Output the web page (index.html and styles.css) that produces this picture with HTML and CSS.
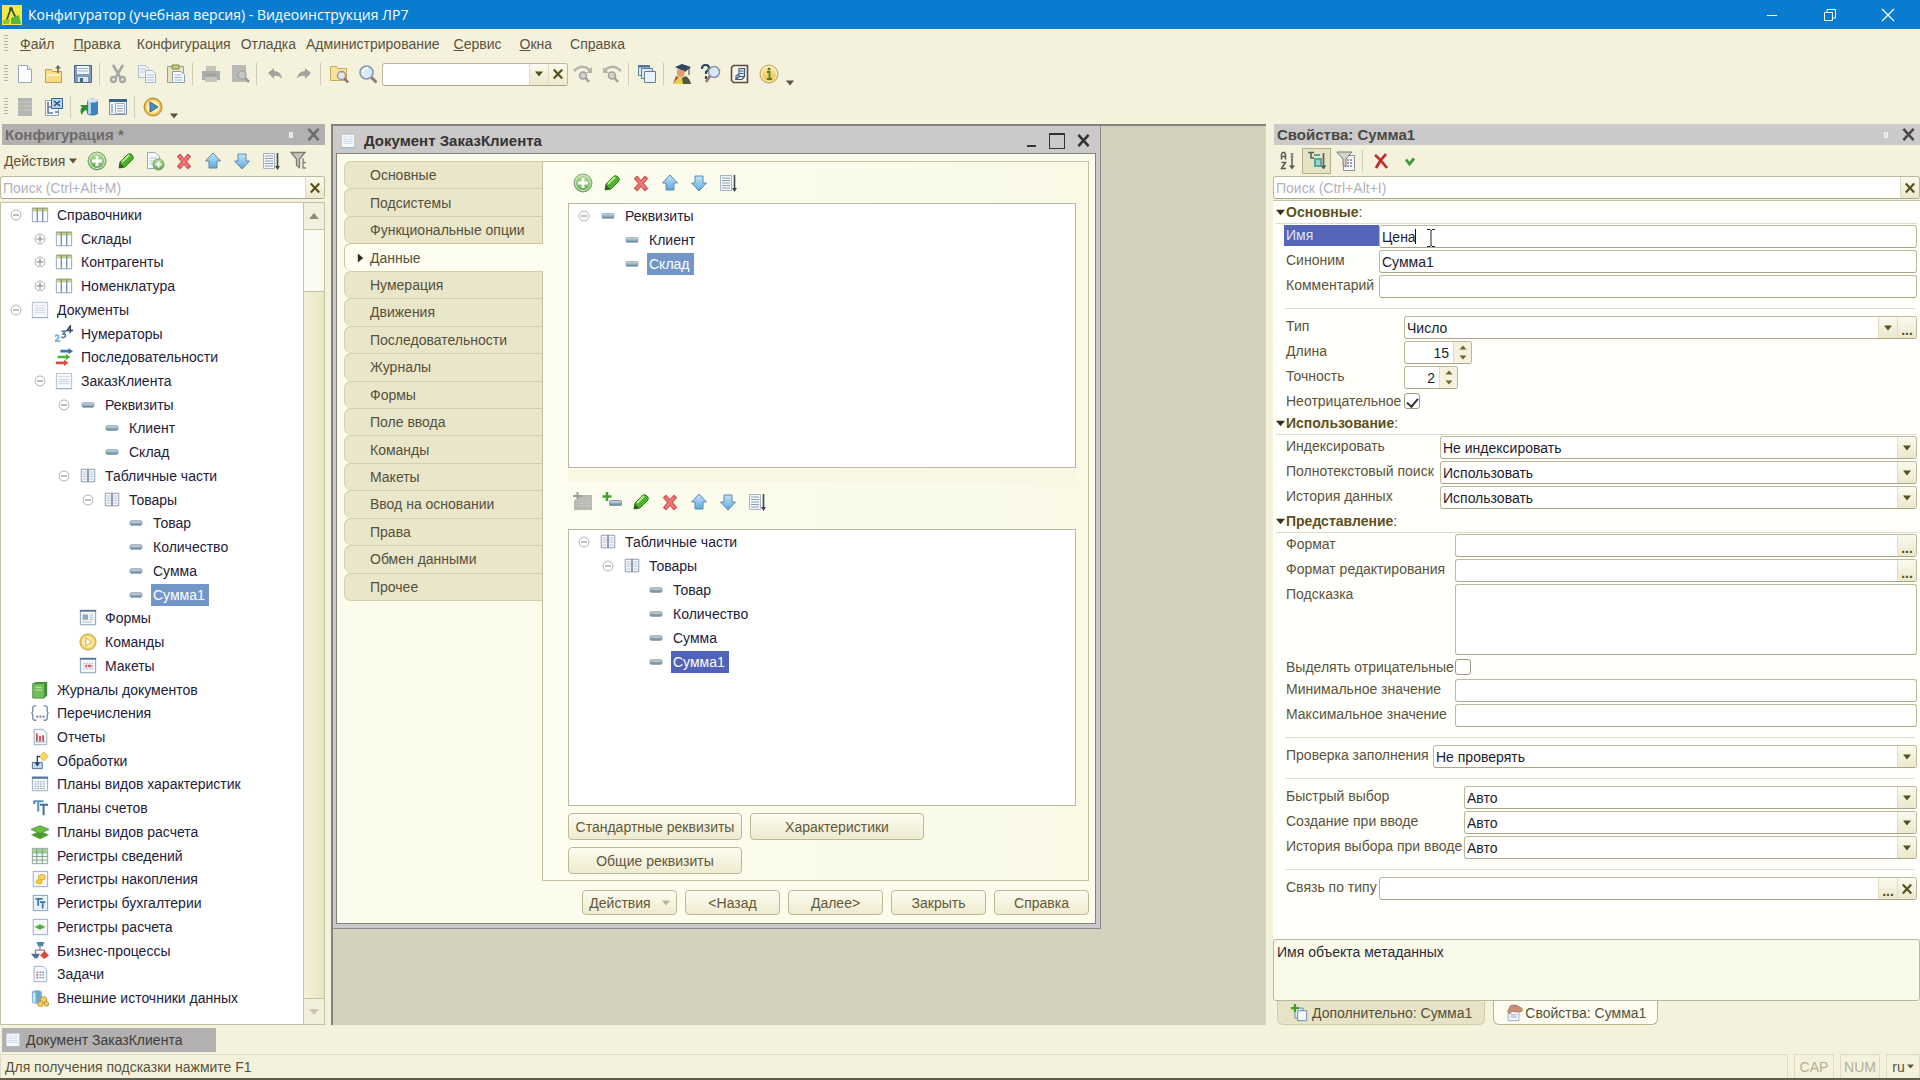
FILE: index.html
```html
<!DOCTYPE html>
<html lang="ru">
<head>
<meta charset="utf-8">
<title>Конфигуратор (учебная версия) - Видеоинструкция ЛР7</title>
<link rel="stylesheet" href="styles.css">
</head>
<body>
<svg class="sprite" aria-hidden="true">
  <defs>
    <linearGradient id="gGreen" x1="0" y1="0" x2="0" y2="1"><stop offset="0" stop-color="#b9e0a0"/><stop offset="1" stop-color="#5fa653"/></linearGradient>
    <linearGradient id="gBlue" x1="0" y1="0" x2="0" y2="1"><stop offset="0" stop-color="#c4e6fa"/><stop offset="1" stop-color="#5fa8dc"/></linearGradient>
    <linearGradient id="gGold" x1="0" y1="0" x2="0" y2="1"><stop offset="0" stop-color="#fdf0b4"/><stop offset="1" stop-color="#e9b93f"/></linearGradient>
    <linearGradient id="gBar" x1="0" y1="0" x2="0" y2="1"><stop offset="0" stop-color="#dbe8ee"/><stop offset="1" stop-color="#5c7f95"/></linearGradient>
  </defs>
  <symbol id="plus-circle" viewBox="0 0 20 20"><circle cx="10" cy="10" r="9" fill="url(#gGreen)" stroke="#7fa278"/><circle cx="10" cy="10" r="7.500" fill="none" stroke="#d3ecc6"/><path d="M10 5v10M5 10h10" stroke="#fff" stroke-width="2.800"/></symbol>
  <symbol id="pencil" viewBox="0 0 20 20"><path d="M3 17l1-6L12 3q2-1 4 1t1 4L9 16z" fill="#4db32e" stroke="#2d7d1c"/><path d="M6 11l7-7" stroke="#b8ee90" stroke-width="2"/><path d="M3 17l1-5 4 4z" fill="#35591f"/></symbol>
  <symbol id="cross-red" viewBox="0 0 20 20"><path d="M4.500 4l11 13M15.500 4l-11 13" stroke="#cf5050" stroke-width="4.500"/><path d="M5.500 5l9 11M14.500 5l-9 11" stroke="#ee7878" stroke-width="2.400"/></symbol>
  <symbol id="arrow-up" viewBox="0 0 20 20"><path d="M10 2l7.500 8H14v7H6v-7H2.500z" fill="url(#gBlue)" stroke="#5f8aab"/></symbol>
  <symbol id="arrow-down" viewBox="0 0 20 20"><path d="M10 18l7.500-8H14V3H6v7H2.500z" fill="url(#gBlue)" stroke="#5f8aab"/></symbol>
  <symbol id="sort-list" viewBox="0 0 20 20"><path d="M2.500 2.500h11v15h-11z" fill="#f6f9fc" stroke="#a7b4c4"/><path d="M4 5h8M4 7.500h8M4 10h8M4 12.500h8M4 15h8" stroke="#8a9cb4"/><path d="M16.500 2v14" stroke="#3c4654" stroke-width="1.600"/><path d="M14 15h5l-2.500 4z" fill="#3c4654"/></symbol>
  <symbol id="doc-plus" viewBox="0 0 20 20"><path d="M2.500 1.500h8l4 4v12h-12z" fill="#f5f8fb" stroke="#9aaabc"/><path d="M5 7h7M5 10h7M5 13h5" stroke="#b3c0d0"/><circle cx="13.500" cy="13.500" r="5.500" fill="url(#gGreen)" stroke="#6f9a68"/><path d="M13.500 10.500v6M10.500 13.500h6" stroke="#fff" stroke-width="2"/></symbol>
  <symbol id="funnel-tree" viewBox="0 0 20 20"><path d="M1 1.500h14L9.500 8v8.500l-3-2V8z" fill="#c7c7be" stroke="#7b7b74" stroke-width="1.300"/><path d="M13 7v10h3M13 11.500h3" stroke="#8b8b84" fill="none" stroke-width="1.500"/></symbol>
  <symbol id="page" viewBox="0 0 20 20"><path d="M3.500 1.500h9l4 4v13h-13z" fill="#fcfdff" stroke="#98a8ba"/><path d="M12.500 1.500v4h4" fill="#dfe8f1" stroke="#98a8ba"/></symbol>
  <symbol id="folder-open" viewBox="0 0 20 20"><path d="M1.500 5.500h6l1 2h9v11h-16z" fill="#f7dc85" stroke="#c2a052"/><path d="M14 9V4" stroke="#6d6647" stroke-width="1.600"/><path d="M11 4.500h6L14 1z" fill="#6d6647"/><path d="M3 11h13" stroke="#fdf2be" stroke-width="2"/></symbol>
  <symbol id="floppy" viewBox="0 0 20 20"><path d="M1.500 1.500h17v17h-17z" fill="#7f9cbd" stroke="#4d6584"/><path d="M4 2h12v8H4z" fill="#f3f7fa"/><path d="M5 4.500h10M5 7h10" stroke="#9db0c4"/><path d="M5 13h10v5H5z" fill="#dde6ee"/><path d="M7 14h3v4H7z" fill="#4d6584"/></symbol>
  <symbol id="scissors" viewBox="0 0 20 20"><path d="M5 1l7 12M15 1L8 13" stroke="#a5a8a6" stroke-width="2.600"/><circle cx="5.500" cy="15.500" r="2.500" fill="none" stroke="#a5a8a6" stroke-width="2.400"/><circle cx="14.500" cy="15.500" r="2.500" fill="none" stroke="#a5a8a6" stroke-width="2.400"/></symbol>
  <symbol id="copy" viewBox="0 0 20 20"><path d="M1.500 1.500h7l3 3v9h-10z" fill="#eef3f6" stroke="#b2c0cc"/><path d="M3 5h6M3 8h6" stroke="#c0ccd6"/><path d="M8.500 6.500h7l3 3v9h-10z" fill="#f3f7fa" stroke="#a5b6c6"/><path d="M10 11h7M10 13.500h7M10 16h7" stroke="#b4c4d4"/></symbol>
  <symbol id="clipboard" viewBox="0 0 20 20"><path d="M1.500 2.500h16v16h-16z" fill="#ece5bc" stroke="#96a08e"/><path d="M6 1h7v4H6z" fill="#c5d070" stroke="#7c8850"/><path d="M6.500 7.500h8l4 3v8h-12z" fill="#fafcff" stroke="#8ba0b6"/><path d="M8.500 11h7M8.500 13.500h8M8.500 16h8" stroke="#9db2c8"/></symbol>
  <symbol id="printer" viewBox="0 0 20 20"><path d="M5 2h10v6H5z" fill="#c4c4be"/><path d="M1 8q0-1 1-1h16q1 0 1 1v8H1z" fill="#aeaea8"/><path d="M4 13h12v5H4z" fill="#c6c6bf"/><path d="M4 11h12" stroke="#94948e"/></symbol>
  <symbol id="preview" viewBox="0 0 20 20"><path d="M2 1h14v17H2z" fill="#b9b9b6"/><circle cx="12" cy="11" r="4" fill="#c6c6c2" stroke="#a5a5a1" stroke-width="1.500"/><path d="M15 14l4 4" stroke="#999994" stroke-width="2.500"/></symbol>
  <symbol id="undo" viewBox="0 0 20 20"><path d="M3 9l6-5v3q7 0 8 8-3-4-8-3v3z" fill="#a3a39d"/></symbol>
  <symbol id="redo" viewBox="0 0 20 20"><path d="M17 9l-6-5v3q-7 0-8 8 3-4 8-3v3z" fill="#a3a39d"/></symbol>
  <symbol id="folder-find" viewBox="0 0 20 20"><path d="M1.500 2.500h6l1 2h9v12h-16z" fill="#f6e39c" stroke="#c9ac5e"/><circle cx="12.500" cy="11.500" r="4" fill="#dfe7f3" stroke="#a38d90" stroke-width="1.300"/><path d="M15.500 14.500l3.500 4" stroke="#8f6b62" stroke-width="2.400"/></symbol>
  <symbol id="magnifier" viewBox="0 0 20 20"><circle cx="8.500" cy="8.500" r="6.500" fill="#d8e8fa" stroke="#8596ae" stroke-width="1.600"/><path d="M5 8q1-4 5-4" stroke="#fff" stroke-width="1.500" fill="none"/><path d="M13.500 13.500l5 5" stroke="#8f7a70" stroke-width="3"/></symbol>
  <symbol id="find-next" viewBox="0 0 20 20"><path d="M1 7q8-8 16-1" fill="none" stroke="#b4b4ad" stroke-width="2.500"/><path d="M19 3v6h-6z" fill="#b4b4ad"/><circle cx="10" cy="11.500" r="3.500" fill="#d3d3cc" stroke="#9f9f99" stroke-width="1.500"/><path d="M12.500 14l3.500 4" stroke="#9f9f99" stroke-width="2.400"/></symbol>
  <symbol id="find-prev" viewBox="0 0 20 20"><path d="M3 6q8-7 16 1" fill="none" stroke="#b4b4ad" stroke-width="2.500"/><path d="M1 3v6h6z" fill="#b4b4ad"/><circle cx="10" cy="11.500" r="3.500" fill="#d3d3cc" stroke="#9f9f99" stroke-width="1.500"/><path d="M12.500 14l3.500 4" stroke="#9f9f99" stroke-width="2.400"/></symbol>
  <symbol id="windows" viewBox="0 0 20 20"><path d="M1.500 1.500h11v10h-11z" fill="#dce9f4" stroke="#5e7f9e"/><path d="M1.500 2.500h11" stroke="#4a708f" stroke-width="2"/><path d="M4.500 4.500h11v10h-11z" fill="#dce9f4" stroke="#5e7f9e"/><path d="M7.500 7.500h11v11h-11z" fill="#eaf3fb" stroke="#5e7f9e"/></symbol>
  <symbol id="graduate" viewBox="0 0 20 20"><path d="M3 3l7-3 9 3-6 5z" fill="#31455c"/><path d="M5 5l8 2-1 5-3 2-4-3z" fill="#dea06c"/><path d="M17 4v7" stroke="#31455c"/><path d="M1 20l8-8 3 8z" fill="#e6cf42"/><path d="M10 14l4-2q4 3 5 8h-8z" fill="#4a5a3a"/><path d="M1 20l3-8 3 1z" fill="#b0562e"/></symbol>
  <symbol id="help-find" viewBox="0 0 20 20"><path d="M1 5q0-4 3.500-4T8 4q0 2-3 4v2M5 12v3" fill="none" stroke="#35475c" stroke-width="2.200"/><circle cx="13" cy="8" r="5.500" fill="#d8e8f8" stroke="#8294ae" stroke-width="1.500"/><path d="M9 12l-4 6" stroke="#98786c" stroke-width="2.600"/></symbol>
  <symbol id="book" viewBox="0 0 20 20"><path d="M3.500 1.500h14v17h-14l-2-2v-13z" fill="#f8f3e8" stroke="#5c4a42" stroke-width="1.600"/><path d="M9 4.500h5.500v8H9zM9 12.500l-3 3h6l2.500-3M6 15.500V12l3-2" fill="#e1eaf5" stroke="#3e5878" stroke-width="1.200"/><path d="M10 7h3.500M10 9.500h3.500" stroke="#3e5878"/></symbol>
  <symbol id="info" viewBox="0 0 20 20"><circle cx="10" cy="10" r="9" fill="url(#gGold)" stroke="#bfa267"/><circle cx="10" cy="10" r="7.500" fill="none" stroke="#fff6d2"/><path d="M8 8h2.500v7M8 15h5" stroke="#54802c" stroke-width="1.800" fill="none"/><circle cx="10" cy="5" r="1.500" fill="#54802c"/></symbol>
  <symbol id="gray-list" viewBox="0 0 20 20"><path d="M3 1h14v18H3z" fill="#b5b5b1"/><path d="M3 5h14M3 9h14M3 13h14" stroke="#c6c6c1"/></symbol>
  <symbol id="tree-close" viewBox="0 0 20 20"><path d="M1.500 3.500h13v15h-13z" fill="#f5f9fd" stroke="#8aa6c4"/><path d="M4 5v11h5M4 10h5M11 10h3M11 15h3" stroke="#60799c" fill="none" stroke-width="1.600"/><path d="M7.500 1.500h11v10h-11z" fill="#b7d4ef" stroke="#34659a"/><path d="M10 4l6 5M16 4l-6 5" stroke="#27527f" stroke-width="1.600"/></symbol>
  <symbol id="db-update" viewBox="0 0 20 20"><path d="M8 3q5-3 11 0v14q-6 3-11 0z" fill="#3e83b8"/><path d="M9 4h3v13H9z" fill="#a9d3ee"/><ellipse cx="13.500" cy="3.500" rx="5.500" ry="2" fill="#cfe5f4"/><path d="M1 8h8v8l-2-3q-3 1-4 5-3-4 0-8z" fill="#2e8d3a"/></symbol>
  <symbol id="form-win" viewBox="0 0 20 20"><path d="M1.500 2.500h17v15h-17z" fill="#eef4fa" stroke="#7a93b0"/><path d="M1 3.500h18" stroke="#3e6284" stroke-width="3"/><path d="M4 7v9" stroke="#a8bacd" stroke-width="2"/><path d="M7.500 6.500h9v10h-9z" fill="#fff" stroke="#a8a9bd"/><path d="M9 9h6M9 11.500h6M9 14h6" stroke="#8495ae"/></symbol>
  <symbol id="play" viewBox="0 0 20 20"><circle cx="10" cy="10" r="9" fill="#e9b93f" stroke="#b58a2f"/><circle cx="10" cy="10" r="6.800" fill="#fdeeb0"/><path d="M7 5l8 5-8 5z" fill="#4b8cbe" stroke="#2e638c"/></symbol>
  <symbol id="play-gold" viewBox="0 0 20 20"><circle cx="10" cy="10" r="9" fill="#f0cc62" stroke="#c6a047"/><circle cx="10" cy="10" r="6.800" fill="#fbeaa6"/><path d="M7.500 5.500l7 4.500-7 4.500z" fill="#fffbe8" stroke="#d2a63d"/></symbol>
  <symbol id="expand-minus" viewBox="0 0 16 16"><circle cx="8" cy="8" r="5" fill="#fff" stroke="#b3b3b3"/><path d="M5 8h6" stroke="#7f7f7f"/></symbol>
  <symbol id="expand-plus" viewBox="0 0 16 16"><circle cx="8" cy="8" r="5" fill="#fff" stroke="#b3b3b3"/><path d="M4.500 8h7M8 4.500v7" stroke="#7f7f7f"/></symbol>
  <symbol id="catalog" viewBox="0 0 20 20"><path d="M1.500 2.500h17v15h-17z" fill="#fafcff" stroke="#8a9cb8"/><path d="M2 2h16v4H2z" fill="#c9cf7e"/><path d="M7 2v15.500M13 2v15.500" stroke="#7c8eae" stroke-width="1.500"/><path d="M1.500 2.500h17" stroke="#97a06a"/></symbol>
  <symbol id="document" viewBox="0 0 20 20"><path d="M1.500 1.500h17v17h-17z" fill="#f6f8fb" stroke="#a9b6c8"/><path d="M4 5h5M11 5h5M4 8h12M4 10.500h12M4 13h12" stroke="#c9d2df"/><path d="M1 18.500h18" stroke="#8fb0c8"/></symbol>
  <symbol id="numbers" viewBox="0 0 20 20"><path d="M0 13q2-3 4-1 1 2-4 6h6" fill="none" stroke="#7fb2d6" stroke-width="2"/><path d="M7 7h4.500L9 10q4 0 2 3-2 2-4 0" fill="none" stroke="#4878a4" stroke-width="1.800"/><path d="M17 9V1l-3.500 5H20" fill="none" stroke="#2d4560" stroke-width="1.700"/></symbol>
  <symbol id="sequence" viewBox="0 0 20 20"><path d="M6 2h9V0l5 3.500L15 7V5H6z" fill="#3f74aa"/><path d="M3 8.500h9v-2l5 3.500-5 3.500v-2H3z" fill="#4cb238"/><path d="M1 15h9v-2l5 3.500-5 3.500v-2H1z" fill="#dd4a3c"/></symbol>
  <symbol id="attribute" viewBox="0 0 20 20"><rect x="3.500" y="7.500" width="13" height="5" rx="1" fill="url(#gBar)" stroke="#7d97a8"/></symbol>
  <symbol id="table-part" viewBox="0 0 20 20"><path d="M2.500 2.500h15v14h-15z" fill="#f6f8fc" stroke="#8792aa"/><path d="M10 2.500v14" stroke="#66718c" stroke-width="1.500"/><path d="M4 5.500h4.500M11.500 5.500H16M4 8h4.500M11.500 8H16M4 10.500h4.500M11.500 10.500H16M4 13.500h4.500M11.500 13.500H16" stroke="#b4bed0"/></symbol>
  <symbol id="form" viewBox="0 0 20 20"><path d="M1.500 1.500h17v16h-17z" fill="#f3f7fb" stroke="#7f94ac"/><path d="M1 2h18" stroke="#55789a" stroke-width="2"/><path d="M4 6h6v6H4z" fill="#8ea8c2"/><path d="M12 6.500h4M12 9h4M12 11.500h4M4 14.500h10" stroke="#a8b8ca"/></symbol>
  <symbol id="template" viewBox="0 0 20 20"><path d="M1.500 1.500h17v16h-17z" fill="#f3f7fb" stroke="#7f94ac"/><path d="M1 2h18" stroke="#55789a" stroke-width="2"/><path d="M5 7h11M5 10h11M5 13h11" stroke="#a9b6c8" stroke-dasharray="2 1"/><path d="M7 8.500h2v3H7zM10 8.500h4v3h-4z" fill="#e0566b"/></symbol>
  <symbol id="journal" viewBox="0 0 20 20"><path d="M2 3l3-2h13v15l-3 3H2z" fill="#3f8f35"/><path d="M2 3h13v16H2z" fill="#74bd5c" stroke="#4c9340"/><path d="M5 7h7M5 10h7" stroke="#c9edb8"/></symbol>
  <symbol id="enum" viewBox="0 0 20 20"><path d="M6 2H4q-2 0-2 2v4l-1 2 1 2v4q0 2 2 2h2M14 2h2q2 0 2 2v4l1 2-1 2v4q0 2-2 2h-2" fill="none" stroke="#7688a0" stroke-width="1.500"/><path d="M6 14h2M9.500 14h2M13 14h2" stroke="#5b6c86" stroke-width="2"/></symbol>
  <symbol id="report" viewBox="0 0 20 20"><path d="M3.500 1.500h10l4 4v13h-14z" fill="#f4f8fb" stroke="#94a6ba"/><path d="M6.500 6v9M10 9v6M13.500 8v7" stroke="#c94b55" stroke-width="2"/><path d="M5 15.500h11" stroke="#8ea2b8"/></symbol>
  <symbol id="processing" viewBox="0 0 20 20"><path d="M14 0l5 5-5 5-4-5z" fill="#f7dc5c" stroke="#d4b03a"/><path d="M1.500 11.500h11v7h-11z" fill="#c6d9ea" stroke="#3f678c"/><path d="M10 5H7v8" fill="none" stroke="#2c4258" stroke-width="1.500"/><path d="M4 12h6l-3 4z" fill="#2c4258"/></symbol>
  <symbol id="char-plan" viewBox="0 0 20 20"><path d="M1.500 2.500h17v15h-17z" fill="#f3f8fc" stroke="#8ea4ba"/><path d="M1 3h18" stroke="#557a9c" stroke-width="2.500"/><path d="M4 7.500h12M4 10h12M4 12.500h12M4 15h12" stroke="#8aa4be" stroke-dasharray="2 1"/></symbol>
  <symbol id="accounts" viewBox="0 0 20 20"><path d="M3 2.500h11M8 3v11M3.500 2v3.500" stroke="#5f95be" stroke-width="2.400" fill="none"/><path d="M10 6.500h9M14 6v12" stroke="#3f6f9c" stroke-width="2.200" fill="none"/></symbol>
  <symbol id="calc-plan" viewBox="0 0 20 20"><path d="M0 13l10-4 10 4-10 5z" fill="#4f9c33"/><path d="M0 7l10-4 10 4-10 5z" fill="#6dba45" stroke="#418a2a" stroke-width=".8"/></symbol>
  <symbol id="info-reg" viewBox="0 0 20 20"><path d="M1.500 1.500h17v17h-17z" fill="#f1f8f1" stroke="#7fa088"/><path d="M2 2h16v4H2z" fill="#a5d098"/><path d="M6.500 2v16M12.500 2v16M2 6.500h16M2 10.500h16M2 14.500h16" stroke="#74997f"/></symbol>
  <symbol id="accum-reg" viewBox="0 0 20 20"><path d="M2.500 1.500h16v17h-16z" fill="#f4f8fc" stroke="#8ea4ba"/><ellipse cx="9" cy="13" rx="4" ry="3" fill="#efc33a"/><ellipse cx="12" cy="8" rx="4" ry="3" fill="#f6d85a" stroke="#d4a42c"/></symbol>
  <symbol id="account-reg" viewBox="0 0 20 20"><path d="M2.500 1.500h16v17h-16z" fill="#e9f2fa" stroke="#6f97b8"/><path d="M5 5.500h8M8 5v8" stroke="#3f78a8" stroke-width="2"/><path d="M10 9h6M13 9v7" stroke="#3f78a8" stroke-width="2"/></symbol>
  <symbol id="calc-reg" viewBox="0 0 20 20"><path d="M2.500 1.500h16v17h-16z" fill="#f4f8fc" stroke="#8ea4ba"/><path d="M4 10l6-3 6 3-6 3z" fill="#5bab3a"/></symbol>
  <symbol id="process" viewBox="0 0 20 20"><path d="M6 0h9l-2 5H8z" fill="#4e87b4"/><path d="M10 5v4M5 13V9h10v3" stroke="#9a7f8b" fill="none" stroke-width="1.500"/><path d="M0 13h10l-3 5H4z" fill="#4a6f98"/><path d="M15 10l5 5-5 4-5-4z" fill="#d8493c"/></symbol>
  <symbol id="task" viewBox="0 0 20 20"><path d="M3.500 1.500h10l4 4v13h-14z" fill="#f6f9fc" stroke="#9aa8ba"/><path d="M6 8h2M6 11h2M6 14h2" stroke="#cf6a74" stroke-width="1.800"/><path d="M9.500 8h6M9.500 11h6M9.500 14h6" stroke="#8798ae" stroke-dasharray="2 1" stroke-width="1.500"/></symbol>
  <symbol id="ext-source" viewBox="0 0 20 20"><path d="M1 3q6-3 11 0v12q-5 3-11 0z" fill="#6fa9d2"/><path d="M2 4h3v11H2z" fill="#cfe6f5"/><circle cx="14" cy="12" r="3.500" fill="#f2cf6b" stroke="#bb8c2a"/><circle cx="10.500" cy="16.500" r="3" fill="#f2cf6b" stroke="#bb8c2a"/><circle cx="17" cy="16.500" r="2.600" fill="#f2cf6b" stroke="#bb8c2a"/></symbol>
  <symbol id="table-add-off" viewBox="0 0 20 20"><path d="M4 3h15v15H1V8h3z" fill="#b8b8b4"/><path d="M4.500 0v8M0 4h9" stroke="#9d9d98" stroke-width="2"/><path d="M2 8h17M2 11h17M2 14h17M9 5v13M14 5v13" stroke="#c4c4be"/></symbol>
  <symbol id="attr-add" viewBox="0 0 20 20"><path d="M5 0v9M.5 4.500h9" stroke="#43a02c" stroke-width="2.500"/><rect x="7.500" y="8.500" width="12" height="5" rx="1" fill="url(#gBar)" stroke="#7d97a8"/></symbol>
  <symbol id="sort-az" viewBox="0 0 20 20"><path d="M3.500 8.500v-5l1-2h2l1 2v5M3.500 5.500h4M3.500 11.500h4l-4 6h4.500" fill="none" stroke="#5a5a55" stroke-width="1.500"/><path d="M14 2v14" stroke="#5a5a55" stroke-width="1.500"/><path d="M11 14.500h6l-3 4z" fill="#5a5a55"/><path d="M12 3h4M12 6h4" stroke="#a1a19a"/></symbol>
  <symbol id="tree-sort" viewBox="0 0 20 20"><path d="M1 1.500h6M4 2v5h3" stroke="#55645c" stroke-width="1.600" fill="none"/><path d="M7 4h6M8 8h6v7H8z" stroke="#53a7a0" stroke-width="2" fill="#9fd0c8"/><path d="M16.500 2v14" stroke="#47605e" stroke-width="1.600"/><path d="M13.500 14.500h6l-3 4z" fill="#47605e"/></symbol>
  <symbol id="funnel-page" viewBox="0 0 20 20"><path d="M7.500 4.500h11v15h-11z" fill="#f4f6fa" stroke="#888f9c"/><path d="M11 9h6M11 12h6M11 15h6" stroke="#7f8898" stroke-dasharray="2 1" stroke-width="1.500"/><path d="M.8 1h15L10 8v8l-3-2V8z" fill="#d4d4cf" stroke="#7b7b74"/></symbol>
  <symbol id="cancel" viewBox="0 0 20 20"><path d="M4 4q5 4 12 13M15 3Q9 9 5 17" fill="none" stroke="#c0302b" stroke-width="2.800"/></symbol>
  <symbol id="ok" viewBox="0 0 20 20"><path d="M6 8.500l3.500 4.500L14 7.500" fill="none" stroke="#3f9b36" stroke-width="2.800"/></symbol>
  <symbol id="tab-add" viewBox="0 0 20 20"><path d="M5.500 4.500h9v11h-9z" fill="#e6eff8" stroke="#5d7ea6"/><path d="M8.500 7.500h10v11h-10z" fill="#f2f8fe" stroke="#5d7ea6"/><path d="M5.500 0v9M1 4.500h9" stroke="#3fa02c" stroke-width="2.500"/></symbol>
  <symbol id="tab-props" viewBox="0 0 20 20"><path d="M3.500 7.500h12v11h-12z" fill="#f5f8fc" stroke="#98a6b8"/><path d="M6 12h7M6 14.500h7" stroke="#8d9cb2"/><path d="M3 8l3-6q4-2 8 0l5 3v3l-6 1-5-1-3 3z" fill="#c88f76" stroke="#9b6852" stroke-width=".8"/></symbol>
  <symbol id="x" viewBox="0 0 20 20"><path d="M4 3.500l12 13M16 3.500l-12 13" stroke="currentColor" stroke-width="3"/></symbol>
  <symbol id="tri" viewBox="0 0 10 10"><path d="M0 2h10L5 8z" fill="currentColor"/></symbol>
  <symbol id="tri-up" viewBox="0 0 10 10"><path d="M0 8h10L5 2z" fill="currentColor"/></symbol>
  <symbol id="tri-right" viewBox="0 0 10 10"><path d="M2 0v10l6-5z" fill="currentColor"/></symbol>
  <symbol id="pin" viewBox="0 0 10 14"><path d="M3.500 4.500h3v5h-3z" fill="#ddd" stroke="#f4f4f4"/></symbol>
  <symbol id="min" viewBox="0 0 16 16"><path d="M3 8.500h10" stroke="currentColor"/></symbol>
  <symbol id="restore" viewBox="0 0 16 16"><path d="M2.500 5.500h8v8h-8zM5 5V2.500h8.500V11H11" fill="none" stroke="currentColor"/></symbol>
  <symbol id="close" viewBox="0 0 16 16"><path d="M2 2l12 12M14 2L2 14" stroke="currentColor" stroke-width="1.200"/></symbol>
  <symbol id="logo" viewBox="0 0 20 20"><path d="M0 0h20v20H0z" fill="#f3e94a"/><path d="M9 3L4 17M9 3l6 12" stroke="#3b5a2e" stroke-width="1.800"/><circle cx="9" cy="4" r="2" fill="#3b5a2e"/><path d="M9 13l8-3 2 9H9z" fill="#57b53a"/><path d="M1 15l7-1-1 5H1z" fill="#8fc435"/></symbol>
</svg>

<header class="titlebar">
  <svg class="logo"><use href="#logo"/></svg>
  <h1>Конфигуратор (учебная версия) - Видеоинструкция ЛР7</h1>
  <div class="sys">
    <button aria-label="Свернуть"><svg><use href="#min"/></svg></button>
    <button aria-label="Восстановить"><svg><use href="#restore"/></svg></button>
    <button aria-label="Закрыть"><svg><use href="#close"/></svg></button>
  </div>
</header>

<nav class="menu">
  <i class="grip"></i>
  <button><u>Ф</u>айл</button><button><u>П</u>равка</button><button class="tight">Конфигурация</button><button class="tight">Отладка</button><button class="tight">Администрирование</button><button><u>С</u>ервис</button><button><u>О</u>кна</button><button>Сп<u>р</u>авка</button>
</nav>

<div class="toolbar">
  <i class="grip"></i>
  <button aria-label="Новый"><svg><use href="#page"/></svg></button><button aria-label="Открыть"><svg><use href="#folder-open"/></svg></button><button aria-label="Сохранить"><svg><use href="#floppy"/></svg></button><i class="sep"></i>
  <button aria-label="Вырезать"><svg><use href="#scissors"/></svg></button><button aria-label="Копировать"><svg><use href="#copy"/></svg></button><button aria-label="Вставить"><svg><use href="#clipboard"/></svg></button><i class="sep"></i>
  <button aria-label="Печать"><svg><use href="#printer"/></svg></button><button aria-label="Просмотр"><svg><use href="#preview"/></svg></button><i class="sep"></i>
  <button aria-label="Отменить"><svg><use href="#undo"/></svg></button><button aria-label="Вернуть"><svg><use href="#redo"/></svg></button><i class="sep"></i>
  <button aria-label="Глобальный поиск"><svg><use href="#folder-find"/></svg></button><button aria-label="Найти"><svg><use href="#magnifier"/></svg></button>
  <div class="field find"><input type="text" aria-label="Текст поиска"><button aria-label="Список"><svg class="tri"><use href="#tri"/></svg></button><button aria-label="Очистить"><svg class="x"><use href="#x"/></svg></button></div>
  <button aria-label="Найти далее"><svg><use href="#find-next"/></svg></button><button aria-label="Найти ранее"><svg><use href="#find-prev"/></svg></button><i class="sep"></i>
  <button aria-label="Окна"><svg><use href="#windows"/></svg></button><i class="sep"></i>
  <button aria-label="Обучение"><svg><use href="#graduate"/></svg></button><button aria-label="Поиск в справке"><svg><use href="#help-find"/></svg></button><button aria-label="Синтакс-помощник"><svg><use href="#book"/></svg></button><button aria-label="О программе"><svg><use href="#info"/></svg></button>
  <button class="more" aria-label="Ещё"><svg class="tri"><use href="#tri"/></svg></button>
</div>

<div class="toolbar second">
  <i class="grip"></i>
  <button aria-label="Список"><svg><use href="#gray-list"/></svg></button><button aria-label="Закрыть конфигурацию"><svg><use href="#tree-close"/></svg></button><i class="sep"></i>
  <button aria-label="Обновить базу"><svg><use href="#db-update"/></svg></button><button aria-label="Окно конфигурации"><svg><use href="#form-win"/></svg></button><i class="sep"></i>
  <button aria-label="Начать отладку"><svg><use href="#play"/></svg></button>
  <button class="more" aria-label="Ещё"><svg class="tri"><use href="#tri"/></svg></button>
</div>

<main class="work">
  <aside class="config">
    <div class="panel-head dim"><h2>Конфигурация *</h2><svg class="pin"><use href="#pin"/></svg><button aria-label="Закрыть"><svg class="x"><use href="#x"/></svg></button></div>
    <div class="tools">
      <button class="actions">Действия <svg class="tri"><use href="#tri"/></svg></button>
      <button aria-label="Добавить"><svg><use href="#plus-circle"/></svg></button><button aria-label="Изменить"><svg><use href="#pencil"/></svg></button><button aria-label="Копировать"><svg><use href="#doc-plus"/></svg></button><button aria-label="Удалить"><svg><use href="#cross-red"/></svg></button><button aria-label="Вверх"><svg><use href="#arrow-up"/></svg></button><button aria-label="Вниз"><svg><use href="#arrow-down"/></svg></button><button aria-label="Сортировать"><svg><use href="#sort-list"/></svg></button><button aria-label="Отбор"><svg><use href="#funnel-tree"/></svg></button>
    </div>
    <div class="field search"><input type="text" aria-label="Поиск" placeholder="Поиск (Ctrl+Alt+M)"><button aria-label="Очистить"><svg class="x"><use href="#x"/></svg></button></div>
    <div class="tree-box">
      <ul class="tree fill">
        <li><svg class="ex"><use href="#expand-minus"/></svg><svg><use href="#catalog"/></svg><span>Справочники</span></li>
        <li class="l1"><svg class="ex"><use href="#expand-plus"/></svg><svg><use href="#catalog"/></svg><span>Склады</span></li>
        <li class="l1"><svg class="ex"><use href="#expand-plus"/></svg><svg><use href="#catalog"/></svg><span>Контрагенты</span></li>
        <li class="l1"><svg class="ex"><use href="#expand-plus"/></svg><svg><use href="#catalog"/></svg><span>Номенклатура</span></li>
        <li><svg class="ex"><use href="#expand-minus"/></svg><svg><use href="#document"/></svg><span>Документы</span></li>
        <li class="l1"><i class="ex"></i><svg><use href="#numbers"/></svg><span>Нумераторы</span></li>
        <li class="l1"><i class="ex"></i><svg><use href="#sequence"/></svg><span>Последовательности</span></li>
        <li class="l1"><svg class="ex"><use href="#expand-minus"/></svg><svg><use href="#document"/></svg><span>ЗаказКлиента</span></li>
        <li class="l2"><svg class="ex"><use href="#expand-minus"/></svg><svg><use href="#attribute"/></svg><span>Реквизиты</span></li>
        <li class="l3"><i class="ex"></i><svg><use href="#attribute"/></svg><span>Клиент</span></li>
        <li class="l3"><i class="ex"></i><svg><use href="#attribute"/></svg><span>Склад</span></li>
        <li class="l2"><svg class="ex"><use href="#expand-minus"/></svg><svg><use href="#table-part"/></svg><span>Табличные части</span></li>
        <li class="l3"><svg class="ex"><use href="#expand-minus"/></svg><svg><use href="#table-part"/></svg><span>Товары</span></li>
        <li class="l4"><i class="ex"></i><svg><use href="#attribute"/></svg><span>Товар</span></li>
        <li class="l4"><i class="ex"></i><svg><use href="#attribute"/></svg><span>Количество</span></li>
        <li class="l4"><i class="ex"></i><svg><use href="#attribute"/></svg><span>Сумма</span></li>
        <li class="l4"><i class="ex"></i><svg><use href="#attribute"/></svg><span class="sel">Сумма1</span></li>
        <li class="l2"><i class="ex"></i><svg><use href="#form"/></svg><span>Формы</span></li>
        <li class="l2"><i class="ex"></i><svg><use href="#play-gold"/></svg><span>Команды</span></li>
        <li class="l2"><i class="ex"></i><svg><use href="#template"/></svg><span>Макеты</span></li>
        <li><i class="ex"></i><svg><use href="#journal"/></svg><span>Журналы документов</span></li>
        <li><i class="ex"></i><svg><use href="#enum"/></svg><span>Перечисления</span></li>
        <li><i class="ex"></i><svg><use href="#report"/></svg><span>Отчеты</span></li>
        <li><i class="ex"></i><svg><use href="#processing"/></svg><span>Обработки</span></li>
        <li><i class="ex"></i><svg><use href="#char-plan"/></svg><span>Планы видов характеристик</span></li>
        <li><i class="ex"></i><svg><use href="#accounts"/></svg><span>Планы счетов</span></li>
        <li><i class="ex"></i><svg><use href="#calc-plan"/></svg><span>Планы видов расчета</span></li>
        <li><i class="ex"></i><svg><use href="#info-reg"/></svg><span>Регистры сведений</span></li>
        <li><i class="ex"></i><svg><use href="#accum-reg"/></svg><span>Регистры накопления</span></li>
        <li><i class="ex"></i><svg><use href="#account-reg"/></svg><span>Регистры бухгалтерии</span></li>
        <li><i class="ex"></i><svg><use href="#calc-reg"/></svg><span>Регистры расчета</span></li>
        <li><i class="ex"></i><svg><use href="#process"/></svg><span>Бизнес-процессы</span></li>
        <li><i class="ex"></i><svg><use href="#task"/></svg><span>Задачи</span></li>
        <li><i class="ex"></i><svg><use href="#ext-source"/></svg><span>Внешние источники данных</span></li>
      </ul>
      <div class="scroll"><button aria-label="Вверх"><svg class="tri"><use href="#tri-up"/></svg></button><i class="thumb"></i><i class="track"></i><button aria-label="Вниз" class="off"><svg class="tri"><use href="#tri"/></svg></button></div>
    </div>
  </aside>

  <section class="desktop">
    <article class="window">
      <div class="win-title"><svg><use href="#document"/></svg><h2>Документ ЗаказКлиента</h2>
        <button class="w-min" aria-label="Свернуть"></button><button class="w-max" aria-label="Развернуть"></button><button aria-label="Закрыть"><svg class="x"><use href="#x"/></svg></button></div>
      <div class="client">
        <div class="pages">
          <nav class="side-tabs">
            <button>Основные</button><button>Подсистемы</button><button>Функциональные опции</button><button class="current"><svg><use href="#tri-right"/></svg>Данные</button><button>Нумерация</button><button>Движения</button><button>Последовательности</button><button>Журналы</button><button>Формы</button><button>Поле ввода</button><button>Команды</button><button>Макеты</button><button>Ввод на основании</button><button>Права</button><button>Обмен данными</button><button>Прочее</button>
          </nav>
          <div class="page">
            <div class="tools first">
              <button aria-label="Добавить"><svg><use href="#plus-circle"/></svg></button><button aria-label="Изменить"><svg><use href="#pencil"/></svg></button><button aria-label="Удалить"><svg><use href="#cross-red"/></svg></button><button aria-label="Вверх"><svg><use href="#arrow-up"/></svg></button><button aria-label="Вниз"><svg><use href="#arrow-down"/></svg></button><button aria-label="Сортировать"><svg><use href="#sort-list"/></svg></button>
            </div>
            <ul class="tree boxed">
              <li><svg class="ex"><use href="#expand-minus"/></svg><svg><use href="#attribute"/></svg><span>Реквизиты</span></li>
              <li class="l1"><i class="ex"></i><svg><use href="#attribute"/></svg><span>Клиент</span></li>
              <li class="l1"><i class="ex"></i><svg><use href="#attribute"/></svg><span class="sel">Склад</span></li>
            </ul>
            <div class="splitter"></div>
            <div class="tools">
              <button aria-label="Добавить табличную часть" disabled><svg><use href="#table-add-off"/></svg></button><button aria-label="Добавить реквизит"><svg><use href="#attr-add"/></svg></button><button aria-label="Изменить"><svg><use href="#pencil"/></svg></button><button aria-label="Удалить"><svg><use href="#cross-red"/></svg></button><button aria-label="Вверх"><svg><use href="#arrow-up"/></svg></button><button aria-label="Вниз"><svg><use href="#arrow-down"/></svg></button><button aria-label="Сортировать"><svg><use href="#sort-list"/></svg></button>
            </div>
            <ul class="tree boxed tall">
              <li><svg class="ex"><use href="#expand-minus"/></svg><svg><use href="#table-part"/></svg><span>Табличные части</span></li>
              <li class="l1"><svg class="ex"><use href="#expand-minus"/></svg><svg><use href="#table-part"/></svg><span>Товары</span></li>
              <li class="l2"><i class="ex"></i><svg><use href="#attribute"/></svg><span>Товар</span></li>
              <li class="l2"><i class="ex"></i><svg><use href="#attribute"/></svg><span>Количество</span></li>
              <li class="l2"><i class="ex"></i><svg><use href="#attribute"/></svg><span>Сумма</span></li>
              <li class="l2"><i class="ex"></i><svg><use href="#attribute"/></svg><span class="sel active">Сумма1</span></li>
            </ul>
            <div class="page-buttons">
              <button class="btn">Стандартные реквизиты</button><button class="btn">Характеристики</button><button class="btn">Общие реквизиты</button>
            </div>
          </div>
        </div>
        <div class="footer">
          <button class="btn drop">Действия <svg class="tri"><use href="#tri"/></svg></button><button class="btn">&lt;Назад</button><button class="btn">Далее&gt;</button><button class="btn">Закрыть</button><button class="btn">Справка</button>
        </div>
      </div>
    </article>
  </section>

  <aside class="props">
    <div class="panel-head"><h2>Свойства: Сумма1</h2><svg class="pin"><use href="#pin"/></svg><button aria-label="Закрыть"><svg class="x"><use href="#x"/></svg></button></div>
    <div class="tools">
      <button aria-label="По алфавиту"><svg><use href="#sort-az"/></svg></button><button class="pressed" aria-label="По категориям"><svg><use href="#tree-sort"/></svg></button><button aria-label="Только важные"><svg><use href="#funnel-page"/></svg></button><i class="sep"></i><button aria-label="Отмена"><svg><use href="#cancel"/></svg></button><button aria-label="Принять"><svg><use href="#ok"/></svg></button>
    </div>
    <div class="field search"><input type="text" aria-label="Поиск свойства" placeholder="Поиск (Ctrl+Alt+I)"><button aria-label="Очистить"><svg class="x"><use href="#x"/></svg></button></div>
    <form class="sheet">
      <h3><svg class="tri"><use href="#tri"/></svg><b>Основные</b>:</h3>
      <div class="group g-main">
        <label for="p1" class="active">Имя</label><div class="field caret"><span class="typed"><input id="p1" type="text" value="Цена"><svg class="ibeam" viewBox="0 0 10 20"><path d="M1 1.500h3l1 1 1-1h3M5 2v16M1 18.500h3l1-1 1 1h3" fill="none" stroke="#222"/></svg></span></div>
        <label for="p2">Синоним</label><div class="field"><input id="p2" type="text" value="Сумма1"></div>
        <label for="p3">Комментарий</label><div class="field"><input id="p3" type="text"></div>
      </div>
      <hr>
      <div class="group g-type">
        <label for="p4">Тип</label><div class="field"><input id="p4" type="text" value="Число"><button type="button" aria-label="Список"><svg class="tri"><use href="#tri"/></svg></button><button type="button" class="dots">...</button></div>
        <label for="p5">Длина</label><div class="field num wide"><input id="p5" type="text" inputmode="numeric" value="15"><span class="spin"><button type="button" aria-label="Больше"><svg><use href="#tri-up"/></svg></button><button type="button" aria-label="Меньше"><svg><use href="#tri"/></svg></button></span></div>
        <label for="p6">Точность</label><div class="field num"><input id="p6" type="text" inputmode="numeric" value="2"><span class="spin"><button type="button" aria-label="Больше"><svg><use href="#tri-up"/></svg></button><button type="button" aria-label="Меньше"><svg><use href="#tri"/></svg></button></span></div>
        <label for="p7">Неотрицательное</label><input id="p7" type="checkbox" checked>
      </div>
      <h3><svg class="tri"><use href="#tri"/></svg><b>Использование</b>:</h3>
      <div class="group g-use">
        <label for="p8">Индексировать</label><div class="field combo"><select id="p8"><option>Не индексировать</option></select><i><svg class="tri"><use href="#tri"/></svg></i></div>
        <label for="p9">Полнотекстовый поиск</label><div class="field combo"><select id="p9"><option>Использовать</option></select><i><svg class="tri"><use href="#tri"/></svg></i></div>
        <label for="p10">История данных</label><div class="field combo"><select id="p10"><option>Использовать</option></select><i><svg class="tri"><use href="#tri"/></svg></i></div>
      </div>
      <h3><svg class="tri"><use href="#tri"/></svg><b>Представление</b>:</h3>
      <div class="group g-view">
        <label for="p11">Формат</label><div class="field"><input id="p11" type="text"><button type="button" class="dots">...</button></div>
        <label for="p12">Формат редактирования</label><div class="field"><input id="p12" type="text"><button type="button" class="dots">...</button></div>
        <label for="p13">Подсказка</label><div class="field area"><textarea id="p13" rows="3"></textarea></div>
        <label for="p14">Выделять отрицательные</label><input id="p14" type="checkbox">
        <label for="p15">Минимальное значение</label><div class="field"><input id="p15" type="text"></div>
        <label for="p16">Максимальное значение</label><div class="field"><input id="p16" type="text"></div>
      </div>
      <hr>
      <div class="group g-check">
        <label for="p17">Проверка заполнения</label><div class="field combo"><select id="p17"><option>Не проверять</option></select><i><svg class="tri"><use href="#tri"/></svg></i></div>
      </div>
      <hr>
      <div class="group g-pick">
        <label for="p18">Быстрый выбор</label><div class="field combo"><select id="p18"><option>Авто</option></select><i><svg class="tri"><use href="#tri"/></svg></i></div>
        <label for="p19">Создание при вводе</label><div class="field combo"><select id="p19"><option>Авто</option></select><i><svg class="tri"><use href="#tri"/></svg></i></div>
        <label for="p20">История выбора при вводе</label><div class="field combo"><select id="p20"><option>Авто</option></select><i><svg class="tri"><use href="#tri"/></svg></i></div>
      </div>
      <hr>
      <div class="group g-main">
        <label for="p21">Связь по типу</label><div class="field"><input id="p21" type="text"><button type="button" class="dots">...</button><button type="button" aria-label="Очистить"><svg class="x"><use href="#x"/></svg></button></div>
      </div>
    </form>
    <div class="hint">Имя объекта метаданных</div>
    <div class="bottom-tabs"><button><svg><use href="#tab-add"/></svg>Дополнительно: Сумма1</button><button class="current"><svg><use href="#tab-props"/></svg>Свойства: Сумма1</button></div>
  </aside>
</main>

<div class="taskbar"><button><svg><use href="#document"/></svg>Документ ЗаказКлиента</button></div>
<footer class="status"><span class="msg">Для получения подсказки нажмите F1</span><span class="ind">CAP</span><span class="ind">NUM</span><button class="lang">ru<svg><use href="#tri"/></svg></button></footer>
</body>
</html>
```
FILE: styles.css
```css
* { box-sizing: border-box; }
html, body { height: 100%; }
body {
  margin: 0;
  display: flex;
  flex-direction: column;
  min-width: 1500px;
  background: #f4f2dd;
  color: #5b533c;
  font: 14px/18px "Liberation Sans", Arial, sans-serif;
  border-bottom: 2px solid #5e5c4c;
  overflow: hidden;
}
.sprite { position: absolute; width: 0; height: 0; }
h1, h2, h3, ul { margin: 0; padding: 0; font: inherit; }
button, input, select, textarea { font: inherit; color: inherit; margin: 0; }
button { border: 0; padding: 0; background: none; display: flex; align-items: center; justify-content: center; white-space: nowrap; }
svg { width: 20px; height: 20px; flex: none; display: block; }
.tri { width: 8px; height: 8px; }
.x { width: 14px; height: 14px; }

/* application title */
.titlebar { display: flex; align-items: center; height: 29px; flex: none; background: #0a7cd0; color: #fff; padding: 0 3px 0 2px; }
.titlebar h1 { flex: 1; margin-left: 6px; font: 14px/20px "Open Sans", "Noto Sans", sans-serif; }
.sys { display: flex; }
.sys button { width: 58px; height: 29px; }
.sys svg { width: 16px; height: 16px; }

/* menu and toolbars */
.menu, .toolbar { display: flex; align-items: center; height: 30px; flex: none; padding-left: 4px; }
.menu button { height: 26px; padding: 0 9px; }
.menu .grip { margin-right: 3px; }
.menu button.tight { padding: 0 5px; }
.menu button:nth-of-type(2) { padding-left: 10px; padding-right: 11px; }
.second { height: 35px; }
.grip { width: 4px; height: 18px; margin-right: 2px; background: repeating-linear-gradient(#b9b69c 0 1px, transparent 1px 3px); }
.toolbar > button { width: 29px; height: 26px; }
.toolbar > .more { width: 14px; align-items: flex-end; }
.sep { width: 1px; height: 22px; margin: 0 3px 0 2px; background: #cfccb3; flex: none; }
.find { width: 186px; }

.field {
  display: flex; height: 23px; min-width: 0;
  border: 1px solid #bdb99a; border-bottom-color: #a9a688; border-radius: 3px;
  background: #fff; color: #1e1c2c; overflow: hidden;
}
.field input, .field select, .field textarea {
  flex: 1; min-width: 0; width: 100%; border: 0; padding: 0 2px; background: none; outline: 0; appearance: none; resize: none;
}
.field > button, .combo > i {
  display: flex; align-items: center; justify-content: center;
  width: 19px; flex: none; color: #55501f;
  border-left: 1px solid #dfdcc2; background: linear-gradient(#fbfaee, #ebe8cc);
}
.field > .dots { align-items: flex-end; font-weight: bold; line-height: 16px; }
.search input::placeholder { color: #b3b1bb; opacity: 1; }

/* work area */
.work { flex: 1; display: flex; min-height: 0; }
.config { width: 331px; flex: none; display: flex; flex-direction: column; }
.config > * { margin-right: 6px; }
.panel-head { display: flex; align-items: center; height: 21px; flex: none; margin-left: 2px; padding: 0 3px; background: #cbc9c9; color: #4a4843; font-weight: bold; }
.panel-head h2 { flex: 1; font-size: 15px; line-height: 20px; }
.panel-head.dim { background: #b2b0b0; color: #6c6a6a; }
.panel-head .pin { width: 10px; height: 14px; margin-right: 9px; }
.panel-head .x, .win-title .x { width: 17px; height: 17px; }
.tools { display: flex; align-items: center; flex: none; height: 31px; }
.tools > button { width: 29px; height: 26px; }
.tools > .actions { width: 82px; padding-left: 4px; justify-content: flex-start; gap: 4px; }
.tools > .pressed { border: 1px solid #b4b08c; background: #e6e3c4; }
.tree-box { flex: 1; display: flex; min-height: 0; margin-top: 3px; border: 1px solid #c5c2a4; background: #fff; }

.tree { list-style: none; background: #fff; color: #23213a; }
.tree li { display: flex; align-items: center; height: 24px; padding-left: 7px; white-space: nowrap; }
.tree .l1 { padding-left: 31px; }
.tree .l2 { padding-left: 55px; }
.tree .l3 { padding-left: 79px; }
.tree .l4 { padding-left: 103px; }
.tree svg { width: 18px; height: 18px; margin: 0 6px 0 7px; }
.tree .ex { width: 16px; height: 16px; margin: 0; flex: none; }
.tree span { padding: 0 2px; line-height: 22px; }
.tree .sel { padding-right: 4px; background: #7396c9; color: #fff; }
.tree .sel.active { background: #5163b8; }
.fill { flex: 1; display: flex; flex-direction: column; padding-bottom: 14px; }
.fill li { flex: 1; height: auto; min-height: 0; }
.scroll { width: 21px; display: flex; flex-direction: column; border-left: 1px solid #c5c2a4; background: #edeacb; color: #8f8c78; }
.scroll button { height: 26px; flex: none; background: #f2f0dc; }
.scroll .tri { width: 10px; height: 10px; }
.scroll .off { color: #c9c6ad; border-top: 1px solid #c5c2a4; }
.scroll .thumb { height: 63px; border: solid #c5c2a4; border-width: 1px 0; background: #fbfbf1; }
.scroll .track { flex: 1; background: linear-gradient(90deg, #f3f1d8, #e9e6c2); }

/* desktop with the document window */
.desktop { flex: 1; position: relative; min-width: 0; border: solid #84827c; border-width: 2px 0 0 2px; background: #d5d1bf; }
.window { position: absolute; left: 0; top: 0; width: 768px; background: #cbc9c9; padding: 0 4px 4px 3px; border: solid #8b8989; border-width: 0 1px 1px 0; }
.win-title { display: flex; align-items: center; height: 27px; padding-top: 2px; color: #35332f; }
.win-title svg { width: 16px; height: 16px; margin: 0 8px 0 4px; }
.win-title h2 { flex: 1; font-size: 15px; font-weight: bold; line-height: 20px; }
.win-title button { width: 26px; height: 20px; }
.win-title .x { margin: 0; }
.w-min::before { content: ""; width: 9px; height: 11px; border-bottom: 2px solid #35332f; }
.w-max::before { content: ""; width: 14px; height: 13px; border: 1px solid #35332f; border-top-width: 2px; }
.client { border: 1px solid #83817c; background: #fcfcec; padding: 7px 6px 8px 7px; }
.pages { display: flex; }
.side-tabs { width: 198px; height: 440px; flex: none; display: flex; flex-direction: column; }
.side-tabs button {
  flex: 1; justify-content: flex-start; padding-left: 25px; color: #55503c;
  border: 1px solid #d2cfac; border-right: 0; border-bottom-width: 0; border-radius: 7px 0 0 7px; background: #e9e6ca;
}
.side-tabs button:last-child { border-bottom-width: 1px; }
.side-tabs .current { position: relative; background: #fdfdf2; border-color: #cfc391; margin-right: -1px; padding-left: 11px; }
.side-tabs .current svg { width: 9px; height: 12px; margin-right: 5px; color: #2f2c1d; }
.page { flex: 1; min-width: 0; border: 1px solid #c3c1a0; background: linear-gradient(90deg, #fdfdf0, #f9f9e6); padding: 0 12px 6px 25px; }
.page .tools { height: 36px; margin-bottom: 9px; }
.page .tools.first { height: 41px; margin-bottom: 0; }
.boxed { min-height: 265px; border: 1px solid #b9b7a0; }
.boxed.tall { min-height: 277px; }
.splitter { height: 12px; margin: 2px 0; background: #f8f7e4; }
.btn {
  height: 25px; color: #62583a; border: 1px solid #bdb994; border-radius: 4px;
  background: linear-gradient(#fdfcf0, #eeebd0);
}
.page-buttons { display: grid; grid-template-columns: 174px 174px; gap: 7px 8px; margin-top: 7px; }
.page-buttons .btn { height: 27px; }
.footer { display: flex; justify-content: flex-end; gap: 8px; margin-top: 9px; }
.footer .btn { width: 95px; }
.footer .drop { gap: 11px; }
.drop .tri { color: #b7b39a; }

/* property palette */
.props { width: 654px; flex: none; display: flex; flex-direction: column; padding-left: 7px; }
.props .panel-head { margin-left: 1px; }
.sheet { flex: 1; min-height: 0; margin-top: 1px; padding: 1px 3px 0 3px; border-top: 1px solid #c5c2a4; background: #fffffb; }
.sheet h3 { display: flex; align-items: center; height: 20px; margin-bottom: 1px; color: #5d4f1c; }
.group + h3 { margin-top: 2px; }
.sheet h3 .tri { width: 9px; height: 9px; color: #33301f; margin-right: 1px; }
.group { display: grid; gap: 2px 0; padding-left: 8px; }
.sheet h3 + .group { border-top: 1px solid #dedcc8; padding-top: 1px; }
.g-main { grid-template-columns: 95px 1fr; }
.g-type { grid-template-columns: 120px 1fr; }
.g-use { grid-template-columns: 156px 1fr; }
.g-view { grid-template-columns: 171px 1fr; }
.g-check { grid-template-columns: 149px 1fr; }
.g-pick { grid-template-columns: 180px 1fr; }
.group label { padding-left: 2px; line-height: 20px; white-space: nowrap; }
.group .active { background: #5566b8; color: #dfe4fb; height: 21px; }
.sheet hr { height: 1px; margin: 10px 2px 7px 9px; border: 0; background: #dedcc8; }
.typed { display: flex; flex: 1; align-items: center; position: relative; }
.ibeam { position: absolute; left: 46px; top: 2px; width: 10px; height: 20px; }
.caret .typed::after { content: ""; position: absolute; left: 35px; top: 3px; width: 1px; height: 15px; background: #111; }
.num { width: 54px; }
.num.wide { width: 68px; }
.num input { text-align: right; padding-right: 4px; }
.spin { width: 18px; flex: none; display: flex; flex-direction: column; justify-content: space-evenly; background: #f4f2dd; border-left: 1px solid #dfdcc2; color: #6b672f; }
.spin svg { width: 8px; height: 7px; margin: 0 auto; }
.group > input[type=checkbox] {
  appearance: none; display: grid; place-items: center; width: 16px; height: 16px; margin: 2px 0;
  border: 1px solid #9d9a80; border-radius: 3px; background: #fff;
}
.group > input:checked::before { content: ""; width: 5px; height: 9px; border: solid #333; border-width: 0 2px 2px 0; transform: rotate(40deg); }
.area { height: 71px; }
.combo { position: relative; }
.hint { height: 62px; flex: none; padding: 3px; border: 1px solid #b9b7a0; border-radius: 3px; background: #fafaea; color: #2c2a36; }
.bottom-tabs { display: flex; gap: 8px; height: 24px; flex: none; padding-left: 4px; }
.bottom-tabs button { gap: 4px; padding: 0 12px; border: 1px solid #cfccaa; border-top: 0; border-radius: 0 0 6px 6px; background: #e6e3c6; color: #55503c; }
.bottom-tabs .current { gap: 2px; padding: 0 11px; background: #fdfcf0; border-color: #b9b58c; }
.bottom-tabs svg { width: 18px; height: 18px; }

/* bottom bars */
.taskbar { display: flex; align-items: center; height: 29px; flex: none; padding-left: 2px; }
.taskbar button { width: 214px; height: 24px; justify-content: flex-start; gap: 5px; padding-left: 3px; background: #b2b0b0; color: #403e3a; }
.taskbar svg { width: 16px; height: 16px; }
.status { display: flex; gap: 6px; height: 24px; flex: none; color: #5b533c; line-height: 24px; }
.status > * { border: 1px solid #dedbc2; border-bottom: 0; }
.msg { flex: 1; padding-left: 4px; }
.ind { width: 40px; text-align: center; color: #b5af93; }
.lang { width: 34px; gap: 2px; }
.lang svg { width: 7px; height: 7px; }
```
